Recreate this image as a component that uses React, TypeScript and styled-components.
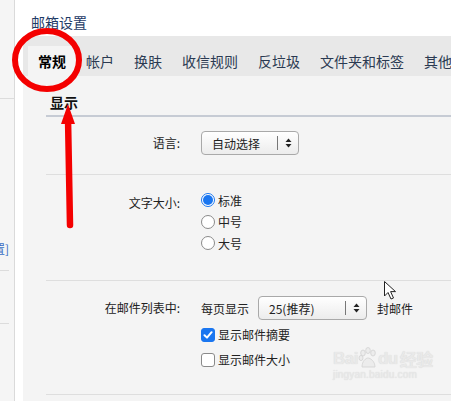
import React from "react"
import styled, {createGlobalStyle} from "styled-components"

const Global = createGlobalStyle`
	html,body{
		margin:0;
		padding:0;
		background:#fff;
	}
	body{
		font-family:"Noto Sans CJK SC","Noto Sans",sans-serif;
		font-size:12px;
		color:#222;
		width:451px;
		height:401px;
		overflow:hidden;
	}
`

const Screen = styled.div`
	position:relative;
	display:flex;
	width:451px;
	height:401px;
	overflow:hidden;
`

const Sidebar = styled.div`
	width:14px;
	flex:none;
	background:#f5f5f5;
	border-right:1px solid #dadada;
	display:flex;
	flex-direction:column;
	overflow:hidden;
`

const SideLine = styled.div<{$top:number,$w:number}>`
	margin-top:${p=>p.$top}px;
	width:${p=>p.$w}px;
	height:1px;
	background:#dcdcdc;
	flex:none;
`

const SideText = styled.div`
	margin-top:143px;
	margin-left:-7px;
	line-height:14px;
	font-size:12px;
	color:#3a6fc4;
	white-space:nowrap;
	flex:none;
`

const Main = styled.div`
	flex:1;
	margin-left:8px;
	display:flex;
	flex-direction:column;
	min-width:0;
`

const Title = styled.div`
	padding:12px 0 4px 8px;
	line-height:20px;
	font-size:14px;
	color:#1d3a66;
`

const TabBar = styled.div`
	height:40px;
	background:#e8e8e8;
	display:flex;
	align-items:flex-end;
	padding-left:5px;
	white-space:nowrap;
`

const Tab = styled.div<{$active?:boolean}>`
	height:30px;
	line-height:30px;
	padding:0 10px;
	font-size:14px;
	flex:none;
	color:${p=>p.$active?"#000":"#2b3a52"};
	font-weight:${p=>p.$active?"bold":"normal"};
	background:${p=>p.$active?"#f4f4f4":"transparent"};
`

const Content = styled.div`
	flex:1;
	background:#f4f4f4;
	padding-left:23px;
`

const SectionHead = styled.div`
	padding:16px 4px 3px;
	line-height:20px;
	font-size:14px;
	font-weight:bold;
	color:#111;
	border-bottom:2px solid #c6cbd4;
`

const Row = styled.div<{$h:number,$pt:number}>`
	box-sizing:border-box;
	height:${p=>p.$h}px;
	padding-top:${p=>p.$pt}px;
	border-bottom:1px solid #dedede;
	display:flex;
	align-items:flex-start;
`

const Label = styled.div`
	width:134px;
	flex:none;
	height:28px;
	line-height:28px;
	text-align:right;
	color:#222;
	white-space:nowrap;
`

const Field = styled.div`
	margin-left:21px;
	display:flex;
	flex-direction:column;
`

const Line = styled.div<{$h:number}>`
	height:${p=>p.$h}px;
	display:flex;
	align-items:center;
	white-space:nowrap;
	color:#222;
`

const SelectBox = styled.div<{$w:number}>`
	box-sizing:border-box;
	width:${p=>p.$w}px;
	height:24px;
	border:1px solid #a9a9a9;
	border-radius:4px;
	background:linear-gradient(#ffffff,#ececec);
	display:flex;
	align-items:center;
	font-size:12px;
	color:#222;
`

const SelectText = styled.div`
	flex:1;
	padding-left:10px;
`

const SelectArrows = styled.div`
	width:20px;
	height:14px;
	border-left:1px solid #777;
	display:flex;
	align-items:center;
	justify-content:center;
`

const Inline = styled.span<{$ml?:number,$mr?:number}>`
	margin-left:${p=>p.$ml||0}px;
	margin-right:${p=>p.$mr||0}px;
`

const Radio = styled.span<{$on?:boolean}>`
	box-sizing:border-box;
	width:14px;
	height:14px;
	border-radius:50%;
	margin-right:3px;
	flex:none;
	background:${p=>p.$on?"#fff":"#fff"};
	border:${p=>p.$on?"1px solid #1a76f0":"1px solid #8a8a8a"};
	display:flex;
	align-items:center;
	justify-content:center;
	&::after{
		content:"";
		display:${p=>p.$on?"block":"none"};
		width:10px;
		height:10px;
		border-radius:50%;
		background:#1a76f0;
	}
`

const Check = styled.span<{$on?:boolean}>`
	box-sizing:border-box;
	width:14px;
	height:14px;
	border-radius:3px;
	margin-right:3px;
	flex:none;
	background:${p=>p.$on?"#1a76f0":"#fff"};
	border:${p=>p.$on?"1px solid #1a76f0":"1px solid #8a8a8a"};
	display:flex;
	align-items:center;
	justify-content:center;
`

const Overlay = styled.svg`
	position:absolute;
	left:0;
	top:0;
	pointer-events:none;
`

const Watermark = styled.div`
	position:absolute;
	left:333px;
	top:347px;
	color:#e9e9e9;
	font-family:"Liberation Sans",sans-serif;
	pointer-events:none;
	text-shadow:0 0 1px #d2d2d2;
`

const WmTop = styled.div`
	display:flex;
	align-items:flex-end;
	font-size:17px;
	font-weight:bold;
	line-height:20px;
	letter-spacing:-0.5px;
`

const WmSub = styled.div`
	font-size:10px;
	line-height:12px;
	letter-spacing:0.2px;
`

function Arrows(){
	return <svg width="7" height="10" viewBox="0 0 7 10">
		<path d="M3.5 0.5 L6.5 4 L0.5 4 Z" fill="#222"/>
		<path d="M3.5 9.5 L6.5 6 L0.5 6 Z" fill="#222"/>
	</svg>
}

function Select(props:{w:number,text:string}){
	return <SelectBox $w={props.w}>
		<SelectText>{props.text}</SelectText>
		<SelectArrows><Arrows/></SelectArrows>
	</SelectBox>
}

function Tick(){
	return <svg width="10" height="10" viewBox="0 0 10 10">
		<path d="M1.5 5.2 L4 7.6 L8.6 2.2" stroke="#fff" strokeWidth="2" fill="none" strokeLinecap="round" strokeLinejoin="round"/>
	</svg>
}

const tabs = ["常规","帐户","换肤","收信规则","反垃圾","文件夹和标签","其他"]

export default function App(){
	return <>
		<Global/>
		<Screen>
			<Sidebar>
				<SideLine $top={98} $w={14}/>
				<SideText>置]</SideText>
				<SideLine $top={14} $w={9}/>
				<SideLine $top={52} $w={9}/>
			</Sidebar>
			<Main>
				<Title>邮箱设置</Title>
				<TabBar>
					{tabs.map((t,i)=><Tab key={t} $active={i==0}>{t}</Tab>)}
				</TabBar>
				<Content>
					<SectionHead>显示</SectionHead>
					<Row $h={58} $pt={12}>
						<Label>语言:</Label>
						<Field>
							<Line $h={28}><Select w={98} text="自动选择"/></Line>
						</Field>
					</Row>
					<Row $h={106} $pt={14}>
						<Label>文字大小:</Label>
						<Field>
							<Line $h={22}><Radio $on/>标准</Line>
							<Line $h={21.5}><Radio/>中号</Line>
							<Line $h={21.5}><Radio/>大号</Line>
						</Field>
					</Row>
					<Row $h={114} $pt={13}>
						<Label>在邮件列表中:</Label>
						<Field>
							<Line $h={28}>
								<Inline $mr={9}>每页显示</Inline>
								<Select w={109} text="25(推荐)"/>
								<Inline $ml={10}>封邮件</Inline>
							</Line>
							<Line $h={25}><Check $on><Tick/></Check>显示邮件摘要</Line>
							<Line $h={25}><Check/>显示邮件大小</Line>
						</Field>
					</Row>
				</Content>
			</Main>
			<Watermark>
				<WmTop>
					<span>Bai</span>
					<svg width="20" height="22" viewBox="0 0 20 22">
						<g fill="#ececec" stroke="#d2d2d2" strokeWidth="0.8">
							<ellipse cx="5" cy="6" rx="2.3" ry="3"/>
							<ellipse cx="10" cy="3.5" rx="2.3" ry="3"/>
							<ellipse cx="15" cy="6" rx="2.3" ry="3"/>
							<ellipse cx="3" cy="11" rx="2" ry="2.6"/>
							<path d="M4 20 C4 14 8 11 10 11 C12 11 17 14 17 20 Z"/>
						</g>
					</svg>
					<span>du</span>
					<span style={{marginLeft:2,fontFamily:"\"Noto Sans CJK SC\",sans-serif"}}>经验</span>
				</WmTop>
				<WmSub>jingyan.baidu.com</WmSub>
			</Watermark>
			<Overlay width="451" height="401" viewBox="0 0 451 401">
				<ellipse cx="47" cy="60" rx="32" ry="29" fill="none" stroke="#f40000" strokeWidth="6"/>
				<path d="M70 225 L68 118" stroke="#f40000" strokeWidth="6.5" strokeLinecap="round"/>
				<path d="M68 104 L61 124 L75 124 Z" fill="#f40000"/>
				<path d="M384.5 281.5 L384.5 296 L388 292.5 L391 299 L393.5 298 L390.6 291.6 L395.5 291.6 Z" fill="#fff" stroke="#222" strokeWidth="1" strokeLinejoin="round"/>
			</Overlay>
		</Screen>
	</>
}
